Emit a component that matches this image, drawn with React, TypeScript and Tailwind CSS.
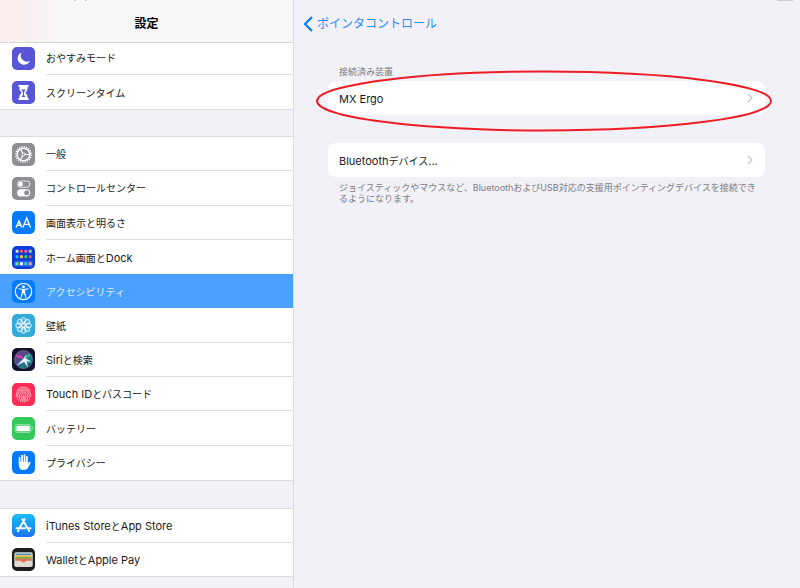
import type { ReactNode } from 'react';
import clsx from 'clsx';

interface SettingsItem {
  id: string;
  label: ReactNode;
  icon: ReactNode;
  tile: string;
  selected?: boolean;
}

const spokes = (count: number) => Array.from({ length: count }, (_, i) => (i * 360) / count);

function MoonIcon() {
  return <path fill="#fff" d="M9.6 5.400a6.100 6.100 0 0 0 8.400 8.300A6.400 6.400 0 1 1 9.600 5.400z" />;
}

function HourglassIcon() {
  return (
    <>
      <path fill="#fff" d="M6.4 4h10.2v1.7h-.9c0 2.8-.7 4.3-2.5 5.8 1.8 1.5 2.5 3 2.5 5.8h.9V19H6.4v-1.7h.9c0-2.8.7-4.3 2.5-5.8C8 10 7.300 8.500 7.300 5.700h-.9z" />
      <path fill="#5856d6" d="M9.300 8.400h4.400c-.3 1-1 1.700-1.700 2.500v3l1.600 2.200H9.400l1.600-2.200v-3c-.8-.8-1.400-1.500-1.700-2.500z" />
    </>
  );
}

function GearIcon() {
  return (
    <g stroke="#fff" fill="none">
      <circle cx="11.5" cy="11.5" r="6.3" strokeWidth="1.500" />
      <circle cx="11.5" cy="11.5" r="7.700" strokeWidth="1.500" strokeDasharray="1.200 1.219" />
      <circle cx="11.5" cy="11.5" r="1.500" strokeWidth=".9" />
      {spokes(3).map(a => (
        <path key={a} d="M13 11.500h4.800" strokeWidth="1.200" transform={`rotate(${a} 11.5 11.5)`} />
      ))}
    </g>
  );
}

function TogglesIcon() {
  return (
    <>
      <rect x="5.500" y="4" width="12.500" height="6.300" rx="3.150" fill="none" stroke="#fff" strokeWidth=".8" />
      <circle cx="8.600" cy="7.150" r="2.300" fill="#fff" />
      <rect x="5" y="12.200" width="13.300" height="7.200" rx="3.600" fill="#fff" />
      <circle cx="14.700" cy="15.800" r="2.500" fill="#8e8e93" />
    </>
  );
}

function TextSizeIcon() {
  return (
    <g stroke="#fff" strokeWidth="1.400" fill="none">
      <path d="M4.200 16.400 7 9.900l2.800 6.500M5.200 14.300h3.700" />
      <path d="M10.900 16.400l3.800-9.300 3.800 9.300M12.200 13.400h5" />
    </g>
  );
}

const gridColors = [
  ['#d8e4f5', '#ff5b50', '#f45ac8', '#a5dd45'],
  ['#1fc4ff', '#ffc21b', '#35d45e', '#ff4a3d'],
];

function HomeGridIcon() {
  return (
    <>
      {gridColors.map((row, r) =>
        row.map((fill, c) => (
          <rect key={`${r}-${c}`} x={3.6 + c * 4.4} y={3.8 + r * 5.5} width="2.900" height="2.900" rx=".6" fill={fill} />
        )),
      )}
      <rect x="2.200" y="14.800" width="18.600" height="5.700" rx="1.200" fill="#3562e6" />
      {['#5ff07a', '#ffffff', '#27c3ff', '#ff9e5c'].map((fill, c) => (
        <rect key={fill} x={3.5 + c * 4.4} y="16.200" width="3" height="3" rx=".6" fill={fill} />
      ))}
    </>
  );
}

function AccessibilityIcon() {
  return (
    <>
      <circle cx="11.500" cy="11.500" r="8.200" fill="none" stroke="#fff" strokeWidth="1.200" />
      <circle cx="11.500" cy="6.800" r="1.400" fill="#fff" />
      <path
        d="M7 8.800c1.500.5 2.500.6 4.500.6s3-.1 4.500-.6M10.600 12.500l-1.500 4.800M12.400 12.500l1.500 4.800"
        stroke="#fff"
        strokeWidth="1.200"
        strokeLinecap="round"
        fill="none"
      />
      <path d="M9.900 9.200h3.200l.1 4.200H9.800z" fill="#fff" />
    </>
  );
}

function FlowerIcon() {
  return (
    <g stroke="#fff" strokeWidth=".8" fill="#fff" fillOpacity=".16">
      {spokes(8).map(a => (
        <ellipse key={a} cx="11.500" cy="6.600" rx="2.300" ry="3" transform={`rotate(${a} 11.5 11.5)`} />
      ))}
      <circle cx="11.500" cy="11.500" r="1.900" />
    </g>
  );
}

function SiriIcon() {
  return (
    <>
      <defs>
        <linearGradient id="siri" x1="0" y1="0" x2="1" y2="1">
          <stop offset="0" stopColor="#8f2f98" />
          <stop offset=".4" stopColor="#4d4a80" />
          <stop offset=".7" stopColor="#167f8c" />
          <stop offset="1" stopColor="#241b4e" />
        </linearGradient>
      </defs>
      <circle cx="11.500" cy="11.500" r="9" fill="url(#siri)" stroke="#7d8ca6" strokeWidth=".6" />
      <path d="M3.200 7.500C7 6 10.500 7.500 12 11 9 10.500 5.500 10.500 3.200 7.500z" fill="#e23bb6" opacity=".8" />
      <path d="M12 11c1-4 4-6 7-4.500-1 3-3.500 4-7 4.500z" fill="#31b98a" opacity=".8" />
      <path d="M12 11c2.500 0 6 1.500 7.500 3.500-3 .5-6.500-.5-7.500-3.500z" fill="#3bc9e8" opacity=".85" />
      <path d="M12 11c-1 4-4 6.500-7.500 6C6 13.500 9 11.500 12 11z" fill="#4377ee" opacity=".8" />
      <path d="M14.500 6.500l-1.200 3.800 6 3.100-4.800-.6 1.600 7-4-5.800-7.200 3.600 5.400-5.600z" fill="#f2fbff" opacity=".95" />
    </>
  );
}

function FingerprintIcon() {
  return (
    <g stroke="#ffd2da" strokeWidth=".8" fill="none" strokeLinecap="round">
      <path d="M5 7.800C6.400 5.400 8.800 4.100 11.500 4.100s5.100 1.300 6.500 3.700" />
      <path d="M4.200 13.500c-.4-4.400 2.700-7.700 7.300-7.700s7.700 3.300 7.300 7.700" />
      <path d="M5.500 16c.4-1.200.3-2.300.3-3.600 0-3 2.400-5.100 5.700-5.100s5.700 2.100 5.700 5.100c0 1.400 0 2.400.3 3.600" />
      <path d="M7 17.500c.5-1.500.5-3.100.5-4.900 0-2.200 1.600-3.700 4-3.700s4 1.500 4 3.700c0 1.800 0 3.400.5 4.900" />
      <path d="M8.700 18.500c.5-1.700.5-3.700.5-5.700 0-1.500.9-2.300 2.300-2.300s2.300.8 2.300 2.300c0 2 0 4 .5 5.700" />
      <path d="M10.600 19c.4-2 .3-4 .3-6 0-.8 1.200-.8 1.200 0 0 2-.1 4 .3 6" />
    </g>
  );
}

function BatteryIcon() {
  return (
    <>
      <rect x="3.200" y="7.600" width="15.800" height="7.800" rx="2" fill="none" stroke="#bdf0c8" strokeWidth=".7" />
      <rect x="4.400" y="8.800" width="13.400" height="5.400" rx="1" fill="#fff" />
      <path d="M20 10.100v2.800c.9-.3.9-2.500 0-2.800z" fill="#bdf0c8" />
    </>
  );
}

function HandIcon() {
  return (
    <g stroke="#fff" fill="none" strokeLinecap="round">
      <path d="M7.600 12V6.600M10 11V4.700M12.500 11V4.200M14.900 11.500V5.800" strokeWidth="1.700" />
      <path d="M6.800 10.800h8.900v1.900l1.400-1.600c.8-.9 1.900-.3 1.400.8l-2.300 4.600c-.8 1.600-2.300 2.500-4.500 2.500-3.200 0-4.900-2-4.900-5z" fill="#fff" stroke="none" />
    </g>
  );
}

function AppStoreIcon() {
  return (
    <g stroke="#fff" strokeWidth="1.900" strokeLinecap="round" fill="none">
      <path d="M12.700 5.200 7.700 13.800M10.300 5.200l6.900 11.900M4.400 14.300h8.700M16 14.300h2.600M6.600 16.200l-.6 1" />
    </g>
  );
}

function WalletIcon() {
  return (
    <>
      <rect x="2.300" y="4.200" width="18.400" height="14.900" rx="1.800" fill="#dedbd0" />
      <path d="M3.300 7.300c0-1.300.6-1.800 1.800-1.800h12.800c1.200 0 1.800.5 1.800 1.800z" fill="#4396c4" />
      <path d="M3.300 7.200h16.400v2.300H3.300z" fill="#f4b73c" />
      <path d="M3.300 9h16.400v2.300H3.300z" fill="#68b44f" />
      <path d="M3.300 10.800h16.400v1.900h-5.200c-.8 0-1.200 1.800-3 1.800s-2.200-1.800-3-1.800H3.300z" fill="#ef6a5a" />
    </>
  );
}

const focusGroup: SettingsItem[] = [
  { id: 'dnd', label: 'おやすみモード', icon: <MoonIcon />, tile: 'bg-[#5856d6]' },
  { id: 'screentime', label: 'スクリーンタイム', icon: <HourglassIcon />, tile: 'bg-[#5856d6]' },
];

const deviceGroup: SettingsItem[] = [
  { id: 'general', label: '一般', icon: <GearIcon />, tile: 'bg-[#8e8e93]' },
  { id: 'control', label: 'コントロールセンター', icon: <TogglesIcon />, tile: 'bg-[#8e8e93]' },
  { id: 'display', label: '画面表示と明るさ', icon: <TextSizeIcon />, tile: 'bg-[#047aff]' },
  { id: 'home', label: <>ホーム画面と<Latin>Dock</Latin></>, icon: <HomeGridIcon />, tile: 'bg-[#0a3bd8]' },
  { id: 'accessibility', label: 'アクセシビリティ', icon: <AccessibilityIcon />, tile: 'bg-[#047aff]', selected: true },
  { id: 'wallpaper', label: '壁紙', icon: <FlowerIcon />, tile: 'bg-[#34aadc]' },
  { id: 'siri', label: <><Latin>Siri</Latin>と検索</>, icon: <SiriIcon />, tile: 'bg-[#12122a]' },
  { id: 'touchid', label: <><Latin>Touch ID</Latin>とパスコード</>, icon: <FingerprintIcon />, tile: 'bg-[#ff2d55]' },
  { id: 'battery', label: 'バッテリー', icon: <BatteryIcon />, tile: 'bg-[#34c759]' },
  { id: 'privacy', label: 'プライバシー', icon: <HandIcon />, tile: 'bg-[#047aff]' },
];

const storeGroup: SettingsItem[] = [
  {
    id: 'store',
    label: <><Latin>iTunes Store</Latin>と<Latin>App Store</Latin></>,
    icon: <AppStoreIcon />,
    tile: 'bg-linear-to-b from-[#1cbcfb] to-[#1d71f2]',
  },
  { id: 'wallet', label: <><Latin>Wallet</Latin>と<Latin>Apple Pay</Latin></>, icon: <WalletIcon />, tile: 'bg-[#1c1c1e]' },
];

// Latin words sit a size above the kana around them
function Latin({ children }: { children: ReactNode }) {
  return <span className="text-[11px]">{children}</span>;
}

function SidebarRow({ item, divided }: { item: SettingsItem; divided: boolean }) {
  return (
    <li className="flex">
      <button
        type="button"
        aria-current={item.selected ? 'page' : undefined}
        className={clsx(
          'flex w-full items-center gap-[11px] pl-3 text-left text-[10px]',
          item.selected ? 'bg-[#4aa0ff] text-[#d9ebff]' : 'text-[#1a1a1a]',
        )}
      >
        <span className={clsx('size-[23px] shrink-0 overflow-hidden rounded-[5px]', item.tile)}>
          <svg viewBox="0 0 23 23" className="size-full" aria-hidden="true">
            {item.icon}
          </svg>
        </span>
        <span
          className={clsx('flex flex-1 items-center self-stretch pt-[2px]', divided && 'border-b border-[#e0e0e2]')}
        >
          <span>{item.label}</span>
        </span>
      </button>
    </li>
  );
}

function SidebarGroup({ items, className }: { items: SettingsItem[]; className: string }) {
  return (
    <ul className={clsx('grid auto-rows-fr border-y border-[#dcdcdf] bg-white', className)}>
      {items.map((item, i) => {
        const next = items[i + 1];
        // no divider next to the highlighted row
        return <SidebarRow key={item.id} item={item} divided={!!next && !next.selected && !item.selected} />;
      })}
    </ul>
  );
}

function DeviceButton({ children }: { children: ReactNode }) {
  return (
    <button
      type="button"
      className="flex h-[34px] w-full items-center justify-between rounded-lg bg-white pr-3 pl-[11px] text-left text-[#1a1a1a]"
    >
      <span className="pt-[2px] text-[10px]">{children}</span>
      <svg viewBox="0 0 6 10" className="h-[10px] w-[6px]" aria-hidden="true">
        <path d="M1 1l4 4-4 4" fill="none" stroke="#c4c4c7" strokeWidth="1.300" />
      </svg>
    </button>
  );
}

export default function App() {
  return (
    <div className="flex h-screen overflow-hidden bg-[#f2f1f7] font-['Inter','Noto_Sans_CJK_JP',sans-serif]">
      <nav className="w-[294px] shrink-0 border-r border-[#dddde0]">
        <header className="relative z-10 flex h-[43px] items-center justify-center border-b border-[#d6d6d8] bg-linear-to-r from-[#faeeef] from-8% to-[#f7f7f7] to-20% pt-[5px]">
          <span className="absolute top-0 left-[74px] h-px w-[2px] bg-[#c9c9c9]" />
          <span className="absolute top-0 left-[85px] h-px w-[2px] bg-[#c9c9c9]" />
          <h1 className="text-[12px] font-bold text-black">設定</h1>
        </header>
        {/* first group is scrolled slightly under the title bar */}
        <SidebarGroup items={focusGroup} className="-mt-[3px] h-[70px]" />
        <SidebarGroup items={deviceGroup} className="mt-[26px] h-[345px]" />
        <SidebarGroup items={storeGroup} className="mt-[27px] h-[69px]" />
      </nav>

      <main className="relative min-w-0 flex-1">
        <span className="absolute top-0 right-[7px] h-px w-4 bg-[#cfced3]" />
        <header className="flex h-[43px] items-center pt-1 pl-[9px]">
          <a href="#accessibility" className="flex items-center gap-1 text-[12px] text-[#2c8dff]">
            <svg viewBox="0 0 10 16" className="h-4 w-[10px]" aria-hidden="true">
              <path d="M9 1L2 8l7 7" fill="none" stroke="#047aff" strokeWidth="2.200" />
            </svg>
            ポインタコントロール
          </a>
        </header>

        <div className="pr-[35px] pl-[34px]">
          <section className="pt-[23px]">
            <h2 className="pb-1 pl-[11px] text-[9px] leading-[11px] text-[#7c7c81]">接続済み装置</h2>
            <div className="relative">
              <DeviceButton>
                <Latin>MX Ergo</Latin>
              </DeviceButton>
              <svg
                viewBox="0 0 456 62"
                preserveAspectRatio="none"
                className="pointer-events-none absolute -top-[11px] -left-3 h-[62px] w-[calc(100%+19px)]"
                aria-hidden="true"
              >
                <ellipse cx="228" cy="31" rx="227" ry="29.500" fill="none" stroke="#ee1c25" strokeWidth="2" />
              </svg>
            </div>
          </section>

          <section className="pt-7">
            <DeviceButton>
              <Latin>Bluetooth</Latin>デバイス<Latin>...</Latin>
            </DeviceButton>
            <p className="pt-[5px] pr-1 pl-[11px] text-[9px] leading-[11px] text-[#7c7c81]">
              ジョイスティックやマウスなど、BluetoothおよびUSB対応の支援用ポインティングデバイスを接続できるようになります。
            </p>
          </section>
        </div>
      </main>
    </div>
  );
}
